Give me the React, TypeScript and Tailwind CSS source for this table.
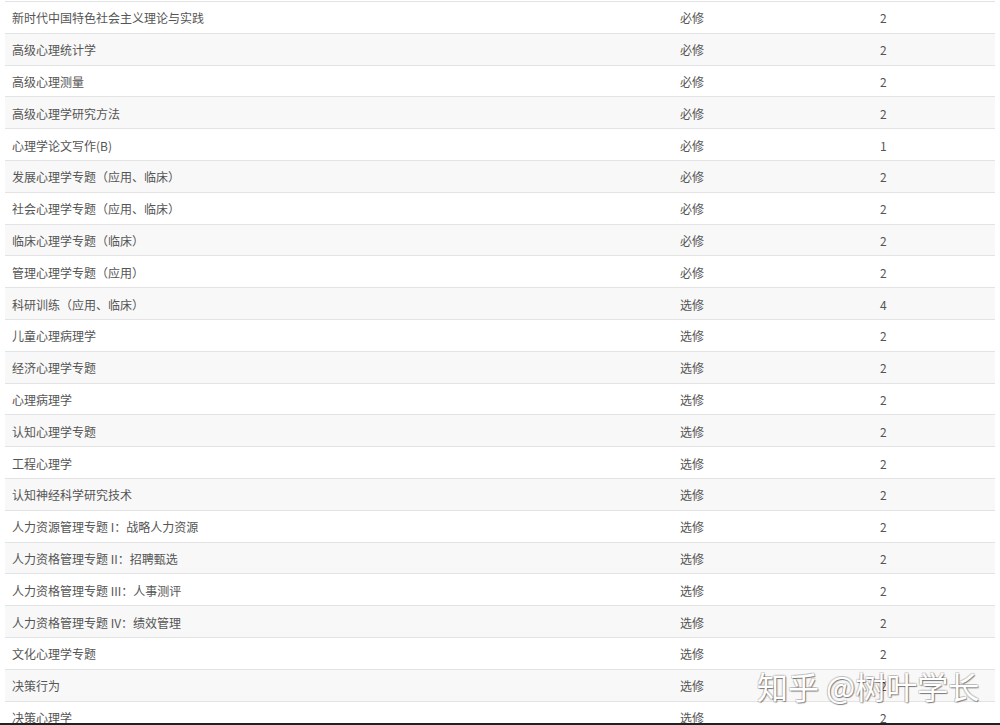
import React from "react";

const rows: [string, string, string][] = [
  ["新时代中国特色社会主义理论与实践", "必修", "2"],
  ["高级心理统计学", "必修", "2"],
  ["高级心理测量", "必修", "2"],
  ["高级心理学研究方法", "必修", "2"],
  ["心理学论文写作(B)", "必修", "1"],
  ["发展心理学专题（应用、临床）", "必修", "2"],
  ["社会心理学专题（应用、临床）", "必修", "2"],
  ["临床心理学专题（临床）", "必修", "2"],
  ["管理心理学专题（应用）", "必修", "2"],
  ["科研训练（应用、临床）", "选修", "4"],
  ["儿童心理病理学", "选修", "2"],
  ["经济心理学专题", "选修", "2"],
  ["心理病理学", "选修", "2"],
  ["认知心理学专题", "选修", "2"],
  ["工程心理学", "选修", "2"],
  ["认知神经科学研究技术", "选修", "2"],
  ["人力资源管理专题 I：战略人力资源", "选修", "2"],
  ["人力资格管理专题 II：招聘甄选", "选修", "2"],
  ["人力资格管理专题 III：人事测评", "选修", "2"],
  ["人力资格管理专题 IV：绩效管理", "选修", "2"],
  ["文化心理学专题", "选修", "2"],
  ["决策行为", "选修", "2"],
  ["决策心理学", "选修", "2"],
];

export default function App() {
  return (
    <div
      className="relative w-[1000px] h-[725px] overflow-hidden bg-white"
      style={{ fontFamily: '"Noto Sans CJK SC", "Noto Sans", sans-serif' }}
    >
      <div className="px-[5px] pt-[1px]">
        {rows.map((r, i) => (
          <div
            key={i}
            className={`flex items-center h-[31.8px] pt-[2px] border-t border-[#e3e3e3] text-[12px] text-[#555] ${
              i % 2 === 1 ? "bg-[#f8f8f8]" : "bg-white"
            }`}
          >
            <div className="w-[675px] pl-[7px] whitespace-nowrap">{r[0]}</div>
            <div className="w-[200px]">{r[1]}</div>
            <div className="flex-1">{r[2]}</div>
          </div>
        ))}
      </div>
      <div className="absolute left-0 right-0 bottom-0 h-[2px] bg-[#222]" />
      <div
        className="absolute left-[757px] top-[666px] text-[31px] leading-[40px] text-white whitespace-nowrap"
        style={{
          textShadow:
            "1px 1px 1px rgba(0,0,0,0.45), -1px -1px 0 rgba(0,0,0,0.15), 1px -1px 0 rgba(0,0,0,0.15), -1px 1px 0 rgba(0,0,0,0.15)",
        }}
      >
        知乎 @树叶学长
      </div>
    </div>
  );
}
